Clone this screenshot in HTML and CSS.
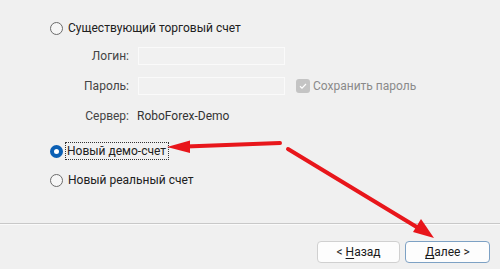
FILE: index.html
```html
<!DOCTYPE html>
<html lang="ru">
<head>
<meta charset="utf-8">
<link rel="stylesheet" href="styles.css">
</head>
<body>
<div class="page">
  <div class="main">
    <div class="radio-row first">
      <span class="radio"></span>
      <span class="rlabel">Существующий торговый счет</span>
    </div>
    <div class="form">
      <span class="flabel">Логин:</span>
      <span class="input"></span>
      <span></span>
      <span class="flabel">Пароль:</span>
      <span class="input"></span>
      <span class="check-wrap"><span class="check"><svg width="14" height="14" viewBox="0 0 14 14"><path d="M4 7.3 L6 9.2 L10 5" fill="none" stroke="#ffffff" stroke-width="1.2"/></svg></span><span class="disabled">Сохранить пароль</span></span>
      <span class="flabel">Сервер:</span>
      <span class="value">RoboForex-Demo</span>
      <span></span>
    </div>
    <div class="radio-row second">
      <span class="radio checked"></span>
      <span class="rlabel focus">Новый демо-счет</span>
    </div>
    <div class="radio-row third">
      <span class="radio"></span>
      <span class="rlabel">Новый реальный счет</span>
    </div>
  </div>
  <div class="sep"></div>
  <div class="footer">
    <span class="btn"><span>&lt; <u>Н</u>азад</span></span>
    <span class="btn default"><span><u>Д</u>алее &gt;</span></span>
  </div>
  <svg class="arrows" width="500" height="269" viewBox="0 0 500 269">
    <line x1="280" y1="143" x2="186" y2="146.5" stroke="#e8161b" stroke-width="4" stroke-linecap="round"/>
    <polygon points="167,147 190,140.5 190,153" fill="#e8161b"/>
    <line x1="288" y1="149" x2="420" y2="229" stroke="#e8161b" stroke-width="4" stroke-linecap="round"/>
    <polygon points="434,238 413,232 421,219" fill="#e8161b"/>
  </svg>
</div>
</body>
</html>
```

FILE: styles.css
```css
* { box-sizing: border-box; }
html, body { margin: 0; padding: 0; }
body {
  background: #f0f0f0;
  font-family: Roboto, "Noto Sans", "Liberation Sans", sans-serif;
  font-size: 12px;
  color: #1a1a1a;
}
.page {
  position: relative;
  width: 500px;
  height: 269px;
  overflow: hidden;
}
.main {
  height: 223px;
  padding-top: 20px;
  padding-left: 50px;
}
.radio-row {
  display: flex;
  align-items: center;
  height: 16px;
  gap: 4px;
}
.radio {
  width: 13px;
  height: 13px;
  border-radius: 50%;
  border: 1px solid #6b6b6b;
  background: #f6f6f6;
  flex: none;
}
.radio.checked {
  border: 4px solid #0a5fb4;
  background: #ffffff;
}
.rlabel {
  line-height: 14px;
  padding: 0 1px;
  color: #202020;
}
.rlabel.focus {
  outline: 1px dotted #333;
  outline-offset: 0;
  padding: 1px 2px 1px 1px;
  margin-left: -1px;
}
.form {
  display: grid;
  grid-template-columns: 79px 147px auto;
  grid-auto-rows: 18px;
  column-gap: 9px;
  row-gap: 12px;
  margin-top: 11px;
  align-items: center;
}
.flabel {
  text-align: right;
  color: #444;
}
.value {
  color: #333;
  margin-left: -1px;
}
.input {
  height: 18px;
  border: 1px solid #fafafa;
  background: #f1f1f1;
}
.check-wrap {
  display: flex;
  align-items: center;
  gap: 3px;
  margin-left: 2px;
}
.check {
  width: 14px;
  height: 14px;
  border-radius: 3px;
  background: #c4c4c4;
  display: block;
}
.check svg { display: block; }
.disabled { color: #8a8a8a; }
.radio-row.second { margin-top: 18px; }
.radio-row.third { margin-top: 13px; }
.sep {
  height: 2px;
  border-top: 1px solid #c8c8c8;
  border-bottom: 1px solid #fafafa;
}
.footer {
  display: flex;
  justify-content: flex-end;
  gap: 5px;
  padding: 16px 10px 0 0;
}
.btn {
  width: 83px;
  height: 22px;
  display: flex;
  align-items: center;
  justify-content: center;
  background: #fdfdfd;
  border: 1px solid #d0d0d0;
  border-radius: 4px;
  color: #1a1a1a;
}
.btn.default {
  border-color: #7da1c4;
  width: 85px;
}
.btn u { text-underline-offset: 2px; }
.arrows {
  position: absolute;
  left: 0;
  top: 0;
  pointer-events: none;
}
```
